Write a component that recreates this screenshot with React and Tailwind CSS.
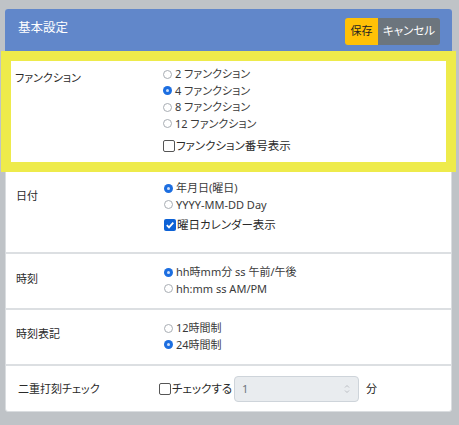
import React from "react";

const font = "font-['Noto_Sans','Noto_Sans_CJK_JP',sans-serif] [font-feature-settings:'palt']";

function Radio({ checked, label }) {
  return (
    <div className="flex items-center h-[16.5px]">
      {checked ? (
        <span className="w-[9px] h-[9px] rounded-full bg-[#1c6ee0] flex items-center justify-center shrink-0">
          <span className="w-[3px] h-[3px] rounded-full bg-[#cfe0fb]" />
        </span>
      ) : (
        <span className="w-[9px] h-[9px] rounded-full border border-[#a8adb3] bg-white shrink-0" />
      )}
      <span className="ml-[3px] text-[11px] text-[#3a3a3a]">{label}</span>
    </div>
  );
}

function Check({ checked, label }) {
  return (
    <div className="flex items-center h-[16px]">
      {checked ? (
        <span className="w-[12px] h-[12px] rounded-[2px] bg-[#0d62d6] flex items-center justify-center shrink-0">
          <svg width="10" height="10" viewBox="0 0 10 10">
            <path d="M1.8 5.2 L4 7.4 L8.3 2.6" fill="none" stroke="white" strokeWidth="1.8" />
          </svg>
        </span>
      ) : (
        <span className="w-[12px] h-[12px] rounded-[2px] border border-[#555] bg-white shrink-0" />
      )}
      <span className="ml-[1px] text-[11.5px] text-[#2a2a2a]">{label}</span>
    </div>
  );
}

function Row({ label, children, labelTop, optTop, height }) {
  return (
    <div className="flex border-b-2 border-[#dcdfe2]" style={{ height }}>
      <div className="w-[158px] pl-[10px] text-[11px] leading-[17px] text-[#2a2a2a]" style={{ paddingTop: labelTop }}>
        {label}
      </div>
      <div className="flex flex-col" style={{ paddingTop: optTop }}>
        {children}
      </div>
    </div>
  );
}

export default function App() {
  return (
    <div className={`w-[459px] h-[425px] bg-[#bfc3c7] pt-[9px] px-[5px] ${font}`}>
      <div className="w-[447px] h-[403px] bg-white border border-[#dadde0] rounded-[3px]">
        {/* header */}
        <div className="h-[42px] -mt-px -mx-px bg-[#6187ca] rounded-t-[3px] flex items-center justify-between pl-[13px] pr-[12px]">
          <span className="text-white text-[12.5px] -mt-[4px]">基本設定</span>
          <div className="flex h-[27px] mt-[2px]">
            <button className="w-[33px] bg-[#ffc107] rounded-l-[3px] text-[11px] text-[#222]">保存</button>
            <button className="w-[62px] bg-[#6c757d] rounded-r-[3px] text-[11.5px] text-white">キャンセル</button>
          </div>
        </div>

        {/* highlighted row */}
        <div className="mx-[5px] mt-[10px] mb-[10px] h-[101px] outline-[10px] outline-solid outline-[#eeeb4b] bg-white flex pt-[5px]">
          <div className="w-[152px] pl-[4px] pt-[3px] text-[11px] leading-[17px] text-[#2a2a2a]">ファンクション</div>
          <div className="flex flex-col">
            <Radio label="2 ファンクション" />
            <Radio checked label="4 ファンクション" />
            <Radio label="8 ファンクション" />
            <Radio label="12 ファンクション" />
            <div className="mt-[6px]">
              <Check label="ファンクション番号表示" />
            </div>
          </div>
        </div>

        <Row label="日付" height="82px" optTop="8px" labelTop="15px">
          <Radio checked label="年月日(曜日)" />
          <Radio label="YYYY-MM-DD Day" />
          <div className="mt-[4px]">
            <Check checked label="曜日カレンダー表示" />
          </div>
        </Row>

        <Row label="時刻" height="56px" optTop="10px" labelTop="16px">
          <Radio checked label="hh時mm分 ss 午前/午後" />
          <Radio label="hh:mm ss AM/PM" />
        </Row>

        <Row label="時刻表記" height="56px" optTop="10px" labelTop="15px">
          <Radio label="12時間制" />
          <Radio checked label="24時間制" />
        </Row>

        <div className="flex items-center h-[46px]">
          <div className="w-[153px] pl-[12px] text-[11px] text-[#2a2a2a]">二重打刻チェック</div>
          <Check label="チェックする" />
          <div className="ml-[2px] w-[125px] h-[26px] bg-[#e9ecef] border border-[#ced4da] rounded-[4px] flex items-center justify-between pl-[7px] pr-[8px]">
            <span className="text-[11px] text-[#6c757d]">1</span>
            <svg width="6" height="10" viewBox="0 0 6 10">
              <path d="M1 3.5 L3 1.5 L5 3.5 M1 6.5 L3 8.5 L5 6.5" fill="none" stroke="#b5b9bd" strokeWidth="0.9" />
            </svg>
          </div>
          <span className="ml-[7px] text-[11px] text-[#222]">分</span>
        </div>
      </div>
    </div>
  );
}
